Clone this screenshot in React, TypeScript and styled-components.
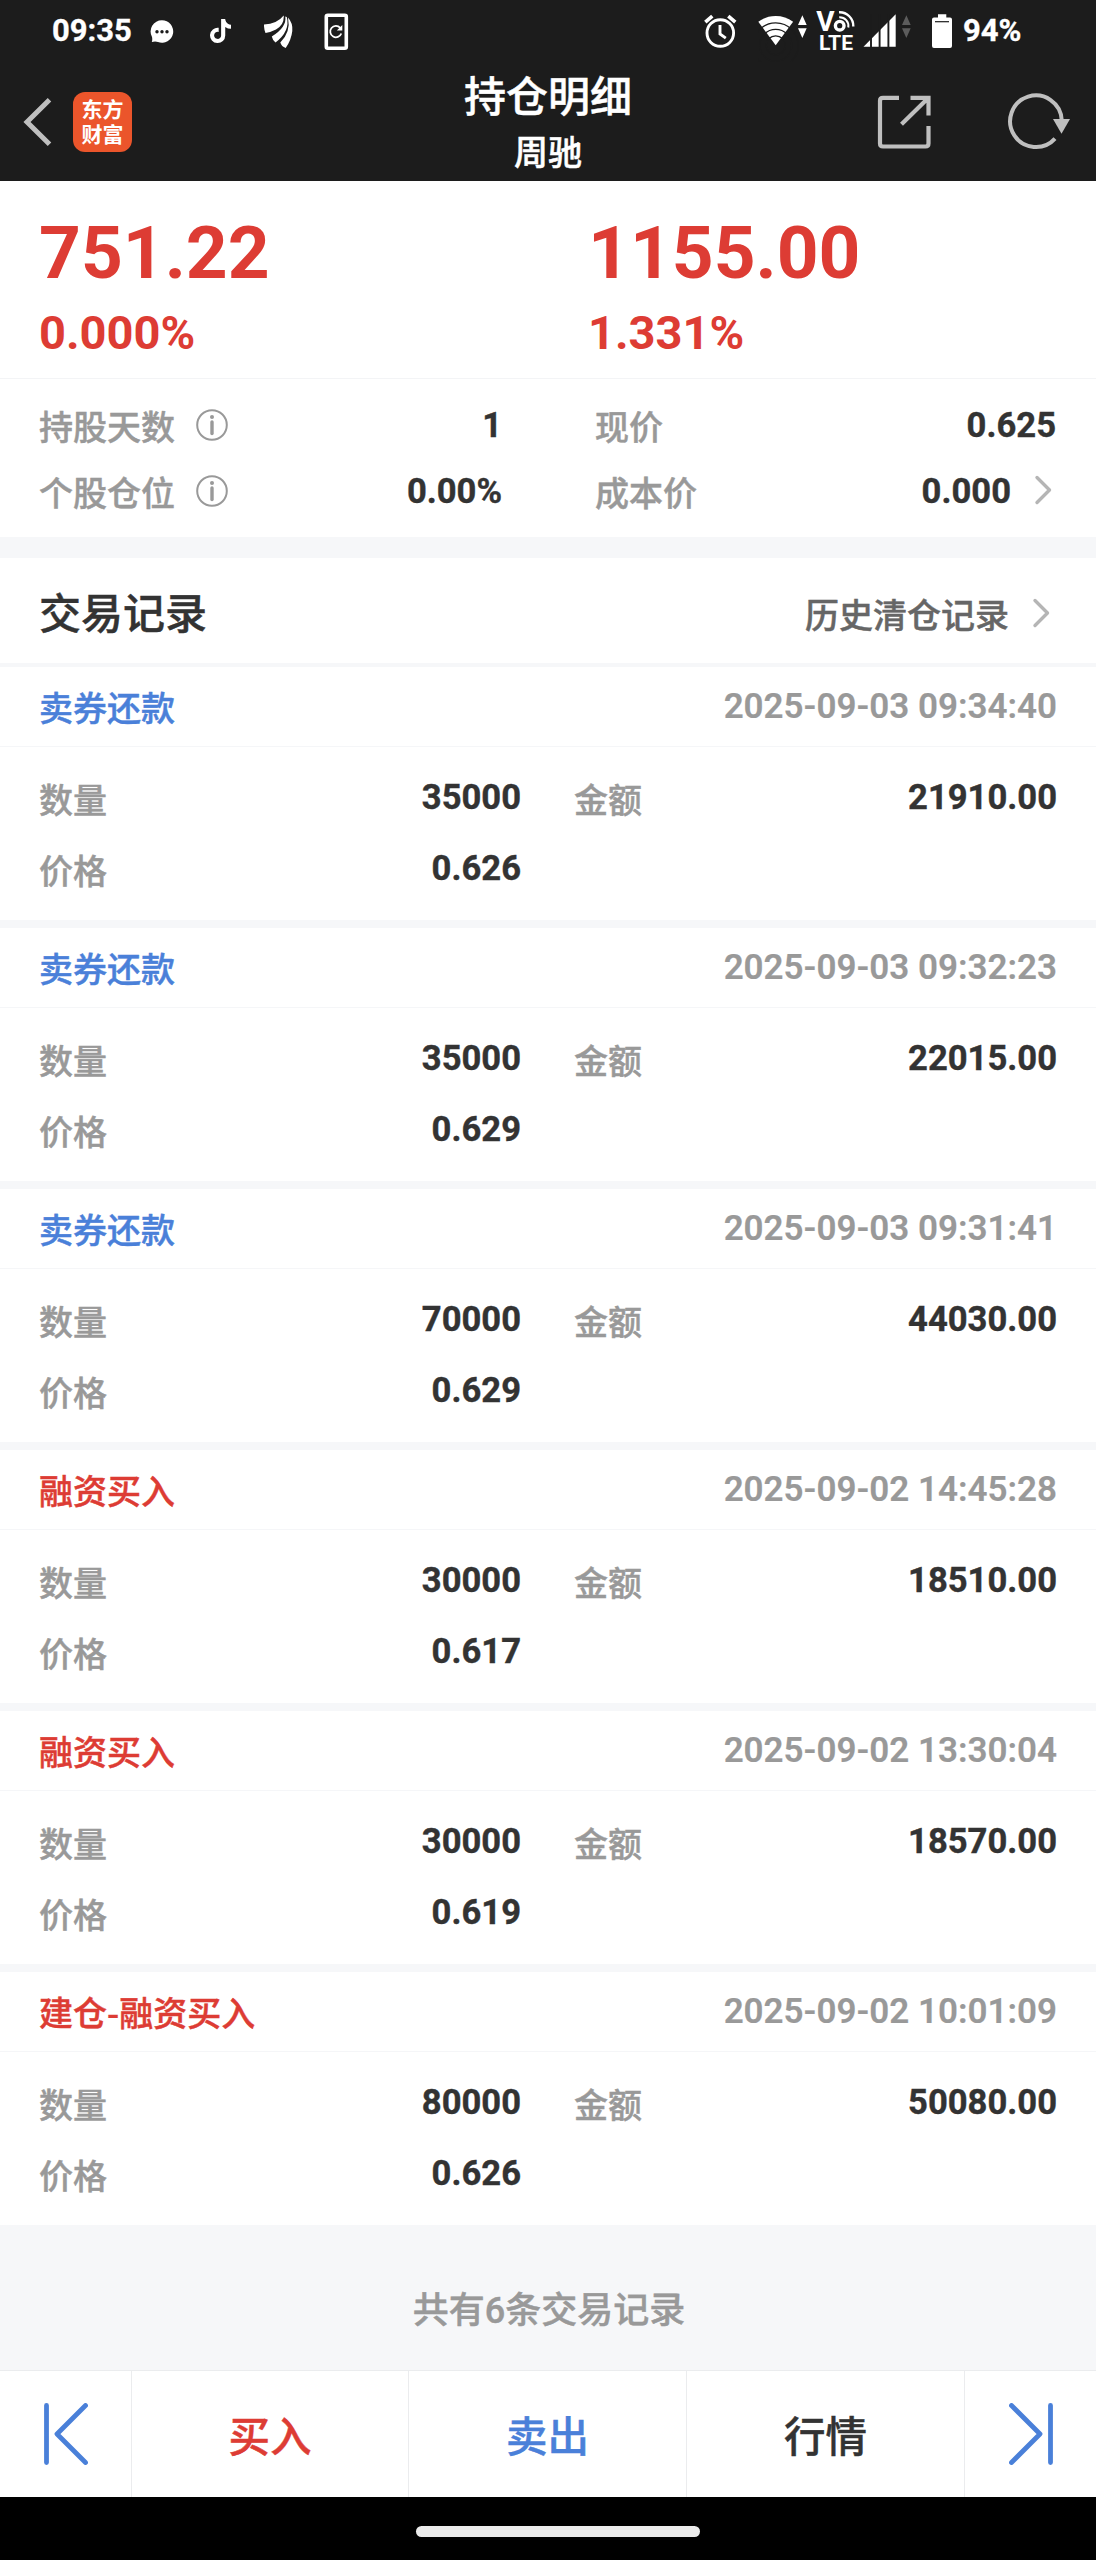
import React from "react";
import styled, { createGlobalStyle } from "styled-components";
import { FaTiktok } from "react-icons/fa6";

const Global = createGlobalStyle`
  html, body { margin: 0; padding: 0; background: #fff; }
  * { box-sizing: border-box; }
`;

const CJK = `"Noto Sans CJK SC", sans-serif`;
const LATIN = `Roboto, "Noto Sans CJK SC", sans-serif`;
const RED = "#dd3c34";
const BLUE = "#4a80d9";
const DARK = "#1c1c1c";
const NAV_ICON = "#bfbfbf";

const Screen = styled.div`
  width: 1096px;
  height: 2560px;
  display: flex;
  flex-direction: column;
  background: #fff;
  font-family: ${CJK};
  font-weight: 500;
  -webkit-text-stroke-width: 0.45px;
  overflow: hidden;
`;

const TopArea = styled.header`
  height: 181px;
  flex: none;
  background: ${DARK};
  color: #fff;
`;

const StatusBar = styled.div`
  height: 62px;
  display: flex;
  align-items: center;
  padding-left: 52px;
`;

const StatusText = styled.span<{ $w: number }>`
  width: ${(p) => p.$w}px;
  font: 700 31px/62px ${LATIN};
  -webkit-text-stroke-width: 0.3px;
`;

const StatusIcon = styled.svg<{ $ml: number }>`
  display: block;
  flex: none;
  height: 62px;
  margin-left: ${(p) => p.$ml}px;
`;

const TiktokIcon = styled(FaTiktok)`
  width: 21px;
  height: 24px;
  flex: none;
  margin-left: 36px;
`;

const NavBar = styled.div`
  height: 119px;
  display: grid;
  grid-template-columns: 400px 1fr 400px;
`;

const NavSide = styled.div<{ $end?: boolean }>`
  display: flex;
  align-items: center;
  justify-content: ${(p) => (p.$end ? "flex-end" : "flex-start")};
  gap: ${(p) => (p.$end ? 73 : 21)}px;
  padding: ${(p) => (p.$end ? "0 25px 0 0" : "0 0 0 23px")};
`;

const NavIcon = styled.svg`
  display: block;
  height: 119px;
`;

const Logo = styled.div`
  width: 59px;
  height: 60px;
  margin-top: 1px;
  padding-bottom: 2px;
  border-radius: 12px;
  background: #eb552b;
  display: flex;
  flex-direction: column;
  align-items: center;
  justify-content: center;
  font: 700 21px/25.5px ${CJK};
  -webkit-text-stroke-width: 0;
`;

const TitleBox = styled.div`
  display: flex;
  flex-direction: column;
  align-items: center;
`;

const Title = styled.h1`
  margin: 0;
  font: 500 42px/63px ${CJK};
`;

const SubTitle = styled.div`
  font: 500 34px/52px ${CJK};
`;

const Summary = styled.section`
  height: 197px;
  display: grid;
  grid-template-columns: 549px 547px;
  padding-top: 28px;
`;

const Profit = styled.div`
  padding-left: 39px;
  color: ${RED};
  -webkit-text-stroke-width: 0;
`;

const ProfitValue = styled.div`
  font: 700 73px/88px ${LATIN};
`;

const ProfitRate = styled.div`
  font: 700 47px/72px ${LATIN};
`;

const Facts = styled.section`
  height: 159px;
  border-top: 1px solid #f3f4f6;
  display: grid;
  grid-template-columns: 463px 461px;
  grid-auto-rows: 66px;
  column-gap: 93px;
  padding: 13px 0 0 39px;
`;

const Fact = styled.div`
  display: flex;
  align-items: center;
  line-height: 66px;
`;

const Label = styled.span`
  font-size: 34px;
  color: #999;
  padding-top: 2px;
`;

const Value = styled.span`
  font-family: ${LATIN};
  font-weight: 700;
  font-size: 34.6px;
  -webkit-text-stroke-width: 0.4px;
  color: #333;
  margin-left: auto;
`;

const Icon = styled.svg<{ $ml?: number; $mt?: number }>`
  display: block;
  flex: none;
  margin-left: ${(p) => p.$ml ?? 0}px;
  margin-top: ${(p) => p.$mt ?? 0}px;
`;

const Gap = styled.div<{ $h: number }>`
  flex: none;
  height: ${(p) => p.$h}px;
  background: #f6f7f9;
`;

const SectionHead = styled.div`
  height: 105px;
  display: flex;
  align-items: center;
  padding: 0 45px 0 39px;
`;

const SectionTitle = styled.h2`
  margin: 0;
  flex: 1;
  font: 500 42px/105px ${CJK};
  color: #333;
`;

const HistoryLink = styled.span`
  font-size: 34px;
  color: #666;
  padding-top: 5px;
`;

const Card = styled.article`
  height: 253px;
  flex: none;
`;

const CardHead = styled.div`
  height: 80px;
  border-bottom: 1px solid #f5f6f8;
  display: flex;
  align-items: center;
  justify-content: space-between;
  padding: 0 39px;
`;

const Kind = styled.span<{ $buy?: boolean }>`
  font-size: 34px;
  color: ${(p) => (p.$buy ? RED : BLUE)};
`;

const Time = styled.time`
  font: 600 35px/60px ${LATIN};
  -webkit-text-stroke-width: 0.2px;
  color: #999;
`;

const CardBody = styled.div`
  display: grid;
  grid-template-columns: 482px 483px;
  grid-auto-rows: 71px;
  column-gap: 53px;
  padding: 15px 39px 0;
`;

const Cell = styled.div`
  display: flex;
  align-items: center;
  line-height: 71px;
`;

const Total = styled.footer`
  height: 145px;
  flex: none;
  background: #f6f7f9;
  display: flex;
  align-items: center;
  justify-content: center;
  padding: 26px 0 0 2px;
  font: 500 36px/60px ${LATIN};
  color: #999;
`;

const ActionBar = styled.nav`
  height: 127px;
  flex: none;
  border-top: 1px solid #ebecee;
  display: grid;
  grid-template-columns: 132px 277px 278px 278px 131px;
`;

const Action = styled.div<{ $color?: string }>`
  display: flex;
  align-items: center;
  justify-content: center;
  border-right: 1px solid #ebecee;
  font-size: 41.5px;
  color: ${(p) => p.$color ?? "#333"};
  &:last-child { border-right: 0; }
`;

const SystemBar = styled.div`
  height: 63px;
  flex: none;
  background: #000;
  display: flex;
  justify-content: center;
  padding: 29px 0 0 20px;
`;

const HomePill = styled.div`
  width: 284px;
  height: 11px;
  border-radius: 6px;
  background: #ebebeb;
`;

const InfoIcon = () => (
  <Icon $ml={21} $mt={-1} width="32" height="32" viewBox="0 0 32 32" fill="none" stroke="#999" strokeWidth="2">
    <circle cx="16" cy="16" r="14.8" />
    <path d="M16 13v11.500" strokeWidth="3.4" strokeLinecap="round" />
    <circle cx="16" cy="8" r="2" fill="#999" stroke="none" />
  </Icon>
);

const More = ({ shift = 0 }: { shift?: number }) => (
  <Icon $ml={22} $mt={shift} width="20" height="30" viewBox="0 0 20 30" fill="none" stroke="#b5b5b5" strokeWidth="3.4" strokeLinecap="round" strokeLinejoin="round">
    <path d="M4 2.500L16.500 15L4 27.500" />
  </Icon>
);

const SkipIcon = ({ forward }: { forward?: boolean }) => (
  <Icon width="44" height="62" viewBox="0 0 44 62" fill="none" stroke={BLUE} strokeWidth="4.8" strokeLinecap="round" strokeLinejoin="round">
    <path d={forward ? "M41.500 2.500V59.500M2.500 2.500L31 31L2.500 59.500" : "M2.500 2.500V59.500M41.500 2.500L13 31L41.500 59.500"} />
  </Icon>
);

const ChatIcon = () => (
  <StatusIcon $ml={16} width="24" viewBox="150 0 24 62">
    <path d="M162 20.200a11.300 11.300 0 1 1-4 21.900q-2.500-1-6.200-.1q.8-2.500.2-5A11.300 11.300 0 0 1 162 20.200z" fill="#fff" />
    <g fill={DARK}>
      <circle cx="157" cy="31.800" r="1.700" />
      <circle cx="162" cy="31.800" r="1.700" />
      <circle cx="167" cy="31.800" r="1.700" />
    </g>
  </StatusIcon>
);

const FeatherIcon = () => (
  <StatusIcon $ml={33} width="30" viewBox="264 0 30 62" fill="#fff">
    <path d="M264 24.500Q277 24 283.700 15.500Q284.500 25 276 29.500Q270 32.500 265.500 33Q263.800 29 264 24.500z" />
    <path d="M285.300 16.500Q287 27 271.800 36.500Q272.500 40 275.500 42.500Q290.500 31 286.800 17z" />
    <path d="M288 17.500Q293 23 292.300 31Q291.300 40 285.700 48Q281.500 46.500 280.300 42.500Q291 32 288 17.500z" />
  </StatusIcon>
);

const PhoneSyncIcon = () => (
  <StatusIcon $ml={30} width="25" viewBox="324 0 25 62" fill="none" stroke="#fff">
    <rect x="326.300" y="15.200" width="20" height="33" rx="1.500" strokeWidth="3.600" />
    <path d="M340.200 27.800A5.700 5.700 0 1 0 341.300 33.500" strokeWidth="1.800" />
    <path d="M342.300 25v5.500h-5.500z" fill="#fff" stroke="none" />
  </StatusIcon>
);

const AlarmIcon = () => (
  <StatusIcon $ml={354} width="35" viewBox="703 0 35 62" fill="none" stroke="#fff">
    <circle cx="720.300" cy="33" r="13.300" strokeWidth="2.900" />
    <path d="M705.300 22.200L712.300 16.200M728.300 16.200L735.300 22.200" strokeWidth="3.600" />
    <path d="M720 25V34L725.800 38.200" strokeWidth="2.900" />
  </StatusIcon>
);

const TrafficArrows = ({ x, color }: { x: number; color: string }) => (
  <path d={`M${x} 25h8.700l-4.350-9.700zM${x} 28.300h8.700l-4.350 9.700z`} fill={color} />
);

const WifiIcon = () => (
  <StatusIcon $ml={20} width="50" viewBox="758 0 50 62">
    <path d="M775.700 45.300L758.300 21.700A29.500 29.500 0 0 1 793.100 21.700z" fill="#fff" />
    <g fill="none" stroke={DARK} strokeWidth="1.300">
      <circle cx="775.700" cy="45.300" r="9.500" />
      <circle cx="775.700" cy="45.300" r="16" />
      <circle cx="775.700" cy="45.300" r="22.500" />
    </g>
    <TrafficArrows x={798} color="#fff" />
  </StatusIcon>
);

const SvgText = styled.text`
  font-family: Roboto, sans-serif;
  font-weight: 700;
  fill: #fff;
`;

const VolteIcon = () => (
  <StatusIcon $ml={8} width="42" viewBox="816 0 42 62">
    <SvgText x="816.300" y="31.300" fontSize="28">V</SvgText>
    <g fill="none" stroke="#fff">
      <circle cx="839.700" cy="25.700" r="4.300" strokeWidth="3.400" />
      <path d="M839.200 17.200A8.800 8.800 0 0 1 848.300 27.500" strokeWidth="2" />
      <path d="M839 12.300A13.700 13.700 0 0 1 853.300 26.500" strokeWidth="2.400" />
    </g>
    <SvgText x="819" y="50" fontSize="20.500" textLength="34" lengthAdjust="spacingAndGlyphs">LTE</SvgText>
  </StatusIcon>
);

const SignalIcon = () => (
  <StatusIcon $ml={5} width="49" viewBox="863 0 49 62">
    <path d="M863.500 46.800L895.700 14.300V46.800z" fill="#fff" />
    <path d="M871 14V48M879.600 14V48M888.400 14V48" stroke={DARK} strokeWidth="1.900" />
    <TrafficArrows x={902} color="#5c5c5c" />
  </StatusIcon>
);

const BatteryIcon = () => (
  <StatusIcon $ml={20} width="20" viewBox="932 0 20 62">
    <path d="M938 14.300h8.300v3.200h3.700q2 0 2 2v26.500q0 2-2 2h-16q-2 0-2-2v-26.500q0-2 2-2h4z" fill="#fff" />
    <path d="M935 21.700h14" stroke={DARK} strokeWidth="1.200" />
  </StatusIcon>
);

const BatteryLevel = styled(StatusText)`
  margin-left: 11px;
`;

const BackIcon = () => (
  <NavIcon width="29" viewBox="23 62 29 119" fill="none" stroke={NAV_ICON} strokeWidth="5">
    <path d="M49.500 99.800L27 122L49.500 144.300" />
  </NavIcon>
);

const ShareIcon = () => (
  <NavIcon width="57" viewBox="876 62 57 119" fill="none" stroke={NAV_ICON} strokeWidth="4.200">
    <path d="M899 97.800H883q-3 0-3 3V143.500q0 3 3 3H925.500q3 0 3-3V126M910.500 97.800H928.500V115.500M901.500 124.300L927.500 98.800" />
  </NavIcon>
);

const RefreshIcon = () => (
  <NavIcon width="65" viewBox="1006 62 65 119" fill="none" stroke={NAV_ICON} strokeWidth="4">
    <path d="M1055 138.600A25.800 25.800 0 1 1 1061.700 120" />
    <path d="M1053 119H1070L1061.500 133.700z" fill={NAV_ICON} stroke="none" />
  </NavIcon>
);

const records = [
  { kind: "卖券还款", buy: false, time: "2025-09-03 09:34:40", qty: "35000", amount: "21910.00", price: "0.626" },
  { kind: "卖券还款", buy: false, time: "2025-09-03 09:32:23", qty: "35000", amount: "22015.00", price: "0.629" },
  { kind: "卖券还款", buy: false, time: "2025-09-03 09:31:41", qty: "70000", amount: "44030.00", price: "0.629" },
  { kind: "融资买入", buy: true, time: "2025-09-02 14:45:28", qty: "30000", amount: "18510.00", price: "0.617" },
  { kind: "融资买入", buy: true, time: "2025-09-02 13:30:04", qty: "30000", amount: "18570.00", price: "0.619" },
  { kind: "建仓-融资买入", buy: true, time: "2025-09-02 10:01:09", qty: "80000", amount: "50080.00", price: "0.626" },
];

export default function App() {
  return (
    <Screen>
      <Global />
      <TopArea>
        <StatusBar>
          <StatusText $w={82}>09:35</StatusText>
          <ChatIcon />
          <TiktokIcon />
          <FeatherIcon />
          <PhoneSyncIcon />
          <AlarmIcon />
          <WifiIcon />
          <VolteIcon />
          <SignalIcon />
          <BatteryIcon />
          <BatteryLevel $w={70}>94%</BatteryLevel>
        </StatusBar>
        <NavBar>
          <NavSide>
            <BackIcon />
            <Logo>
              <span>东方</span>
              <span>财富</span>
            </Logo>
          </NavSide>
          <TitleBox>
            <Title>持仓明细</Title>
            <SubTitle>周驰</SubTitle>
          </TitleBox>
          <NavSide $end>
            <ShareIcon />
            <RefreshIcon />
          </NavSide>
        </NavBar>
      </TopArea>
      <Summary>
        <Profit>
          <ProfitValue>751.22</ProfitValue>
          <ProfitRate>0.000%</ProfitRate>
        </Profit>
        <Profit>
          <ProfitValue>1155.00</ProfitValue>
          <ProfitRate>1.331%</ProfitRate>
        </Profit>
      </Summary>
      <Facts>
        <Fact><Label>持股天数</Label><InfoIcon /><Value>1</Value></Fact>
        <Fact><Label>现价</Label><Value>0.625</Value></Fact>
        <Fact><Label>个股仓位</Label><InfoIcon /><Value>0.00%</Value></Fact>
        <Fact><Label>成本价</Label><Value>0.000</Value><More shift={-3} /><Icon width="3" height="4" /></Fact>
      </Facts>
      <Gap $h={21} />
      <SectionHead>
        <SectionTitle>交易记录</SectionTitle>
        <HistoryLink>历史清仓记录</HistoryLink>
        <More shift={4} />
      </SectionHead>
      <Gap $h={4} />
      {records.map((r, i) => (
        <React.Fragment key={r.time}>
          {i > 0 && <Gap $h={8} />}
          <Card>
            <CardHead>
              <Kind $buy={r.buy}>{r.kind}</Kind>
              <Time>{r.time}</Time>
            </CardHead>
            <CardBody>
              <Cell><Label>数量</Label><Value>{r.qty}</Value></Cell>
              <Cell><Label>金额</Label><Value>{r.amount}</Value></Cell>
              <Cell><Label>价格</Label><Value>{r.price}</Value></Cell>
            </CardBody>
          </Card>
        </React.Fragment>
      ))}
      <Total>共有6条交易记录</Total>
      <ActionBar>
        <Action><SkipIcon /></Action>
        <Action $color={RED}>买入</Action>
        <Action $color={BLUE}>卖出</Action>
        <Action>行情</Action>
        <Action><SkipIcon forward /></Action>
      </ActionBar>
      <SystemBar><HomePill /></SystemBar>
    </Screen>
  );
}
